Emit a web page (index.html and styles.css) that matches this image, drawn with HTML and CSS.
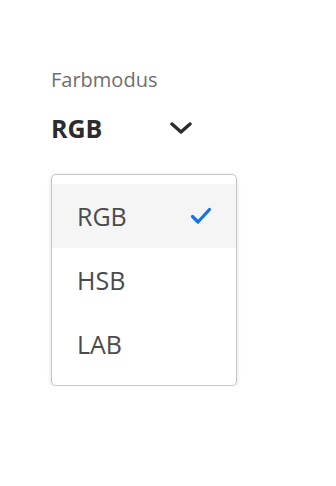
FILE: index.html
```html
<!DOCTYPE html>
<html>
<head>
<meta charset="UTF-8">
<title>Farbmodus</title>
<link rel="stylesheet" href="styles.css">
</head>
<body>
<div class="field">
	<div class="label">Farbmodus</div>
	<div class="picker">
		<span class="value">RGB</span>
		<svg class="chevron" width="22" height="12" viewBox="0 0 22 12">
			<path d="M2 2 L11 10 L20 2" fill="none" stroke="#2c2c2c" stroke-width="3.4" stroke-linecap="round" stroke-linejoin="round"/>
		</svg>
	</div>
	<ul class="menu">
		<li class="item selected">
			<span>RGB</span>
			<svg class="check" width="22" height="18" viewBox="0 0 22 18">
				<path d="M2.5 9.5 L8 15 L19.5 2.5" fill="none" stroke="#1473e6" stroke-width="3.2" stroke-linecap="round" stroke-linejoin="round"/>
			</svg>
		</li>
		<li class="item"><span>HSB</span></li>
		<li class="item"><span>LAB</span></li>
	</ul>
</div>
</body>
</html>
```

FILE: styles.css
```css
body {
	margin : 0;
	background-color : white;
	font-family : "Open Sans", "Noto Sans", sans-serif;
}
.field {
	padding-top : 66px;
	padding-left : 51px;
}
.label {
	font-size : 20px;
	color : #6e6e6e;
	line-height : 28px;
}
.picker {
	width : 141px;
	height : 44px;
	margin-top : 12px;
	display : flex;
	align-items : center;
	justify-content : space-between;
}
.value {
	font-size : 25px;
	font-weight : bold;
	color : #2c2c2c;
}
.chevron {
	display : block;
}
.menu {
	list-style : none;
	margin : 24px 0 0 0;
	padding : 9px 0;
	width : 184px;
	border : 1px solid #c8c8c8;
	border-radius : 5px;
	box-shadow : 0 1px 4px rgba(0, 0, 0, 0.15);
}
.item {
	height : 64px;
	padding : 0 24px 0 25px;
	display : flex;
	align-items : center;
	justify-content : space-between;
	font-size : 25px;
	color : #4b4b4b;
}
.selected {
	background-color : #f5f5f5;
}
.check {
	display : block;
}
```
